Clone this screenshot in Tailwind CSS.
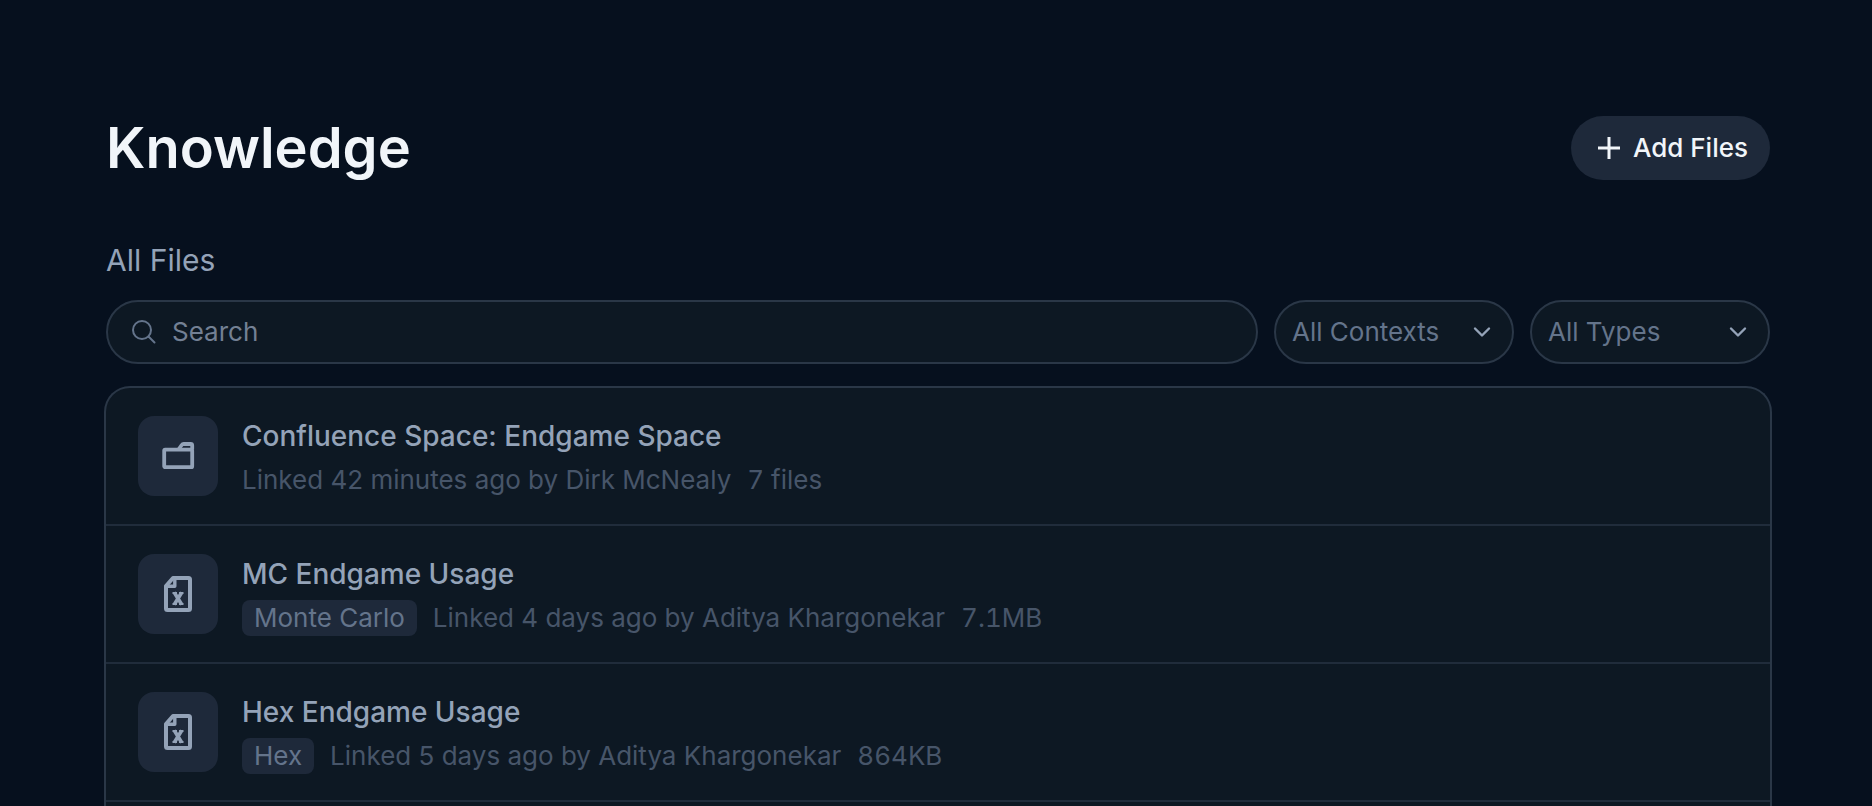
<!DOCTYPE html>
<html lang="en">
<head>
  <meta charset="UTF-8" />
  <meta name="viewport" content="width=device-width, initial-scale=1.0"/>
  <title>Knowledge</title>
  <script src="https://cdn.jsdelivr.net/npm/@tailwindcss/browser@4"></script>
</head>
<body class="bg-[#06101e] font-['Inter',sans-serif] text-[26px] leading-9">

  <main class="flex flex-col min-h-screen pl-[106px] pr-[102px] pt-[116px]">
    <header class="flex items-center justify-between">
      <h1 class="text-[56px] leading-16 font-semibold text-[#f1f5f9]">Knowledge</h1>
      <button type="button" class="flex items-center h-16 pl-6 pr-[22px] gap-2.5 rounded-full bg-[#1e293a] text-[#f1f5f9] font-medium">
        <svg class="w-7 h-7" viewBox="0 0 28 28" fill="none" stroke="currentColor" stroke-width="3"><path d="M14 3v22M3 14h22"/></svg>
        Add Files
      </button>
    </header>

    <h2 class="mt-[60px] text-[30px] leading-10 text-[#94a3b8]">All Files</h2>

    <!-- Filters -->
    <form class="mt-5 flex gap-4">
      <label class="flex flex-1 items-center h-16 pl-[22px] pr-6 gap-3.5 rounded-full border-2 border-[#2a3747] bg-[#0d1823]">
        <svg class="w-7 h-7 text-[#64748b]" viewBox="0 0 28 28" fill="none" stroke="currentColor" stroke-width="2" stroke-linecap="round"><circle cx="12" cy="12" r="9"/><path d="M18.5 18.5l6 6"/></svg>
        <input type="text" aria-label="Search" placeholder="Search" class="flex-1 bg-transparent outline-none text-[#cbd5e1] placeholder:text-[#738094]" />
      </label>
      <div class="relative w-60">
        <select aria-label="Context" class="appearance-none w-full h-16 px-4 rounded-full border-2 border-[#2a3747] bg-[#0d1823] text-[#64748b]">
          <option>All Contexts</option>
        </select>
        <svg class="absolute right-5 top-5 w-6 h-6 text-[#94a3b8] pointer-events-none" viewBox="0 0 24 24" fill="none" stroke="currentColor" stroke-width="2.4" stroke-linecap="round" stroke-linejoin="round"><path d="M5 8.5l7 7 7-7"/></svg>
      </div>
      <div class="relative w-60">
        <select aria-label="Type" class="appearance-none w-full h-16 px-4 rounded-full border-2 border-[#2a3747] bg-[#0d1823] text-[#64748b]">
          <option>All Types</option>
        </select>
        <svg class="absolute right-5 top-5 w-6 h-6 text-[#94a3b8] pointer-events-none" viewBox="0 0 24 24" fill="none" stroke="currentColor" stroke-width="2.4" stroke-linecap="round" stroke-linejoin="round"><path d="M5 8.5l7 7 7-7"/></svg>
      </div>
    </form>

    <!-- File list -->
    <ul class="flex-1 mt-[22px] -mx-0.5 rounded-t-[26px] border-2 border-b-0 border-[#2a3747] bg-[#0d1823] text-[#475569]">
      <li class="flex items-center gap-6 px-8 h-[138px] border-b-2 border-[#202c3b]">
        <div class="flex items-center justify-center w-20 h-20 rounded-2xl bg-[#1e293a] text-[#94a3b8]">
          <svg class="w-10 h-10" viewBox="0 0 40 40" fill="none" stroke="currentColor" stroke-width="3.8" stroke-linejoin="round"><rect x="6.2" y="13.6" width="28" height="17.6" rx="1"/><path d="M20.5 13.5l3.2-4.5q.7-1 2-1h7q1.500 0 1.500 1.500v4"/></svg>
        </div>
        <div class="pt-1">
          <div class="text-[28px] leading-9 font-medium text-[#94a3b8]">Confluence Space: Endgame Space</div>
          <div class="flex gap-4 mt-2"><span>Linked 42 minutes ago by Dirk McNealy</span><span class="tabular-nums">7 files</span></div>
        </div>
      </li>
      <li class="flex items-center gap-6 px-8 h-[138px] border-b-2 border-[#202c3b]">
        <div class="flex items-center justify-center w-20 h-20 rounded-2xl bg-[#1e293a] text-[#94a3b8]">
          <svg class="w-10 h-10" viewBox="0 0 40 40" fill="none" stroke="currentColor" stroke-width="4" stroke-linejoin="round"><path d="M8 12l7-8h15.500q1.500 0 1.500 1.500v29q0 1.500-1.500 1.500h-21q-1.500 0-1.500-1.500z"/><path d="M16.800 4.500v7.700h-8.500" stroke-width="3.400"/><path d="M16.300 18.500l7.400 12M23.700 18.500l-7.400 12" stroke-width="3.600"/><path d="M14.500 19h4.500M21 19h4.500M14.500 30h4.500M21 30h4.500" stroke-width="2.200"/></svg>
        </div>
        <div class="pt-1">
          <div class="text-[28px] leading-9 font-medium text-[#94a3b8]">MC Endgame Usage</div>
          <div class="flex gap-4 mt-2"><span class="px-3 rounded-lg bg-[#1e293a] text-[#64748b]">Monte Carlo</span><span>Linked 4 days ago by Aditya Khargonekar</span><span class="tabular-nums">7.1MB</span></div>
        </div>
      </li>
      <li class="flex items-center gap-6 px-8 h-[138px] border-b-2 border-[#202c3b]">
        <div class="flex items-center justify-center w-20 h-20 rounded-2xl bg-[#1e293a] text-[#94a3b8]">
          <svg class="w-10 h-10" viewBox="0 0 40 40" fill="none" stroke="currentColor" stroke-width="4" stroke-linejoin="round"><path d="M8 12l7-8h15.500q1.500 0 1.500 1.500v29q0 1.500-1.500 1.500h-21q-1.500 0-1.500-1.500z"/><path d="M16.800 4.500v7.700h-8.500" stroke-width="3.400"/><path d="M16.300 18.500l7.400 12M23.700 18.500l-7.400 12" stroke-width="3.600"/><path d="M14.500 19h4.500M21 19h4.500M14.500 30h4.500M21 30h4.500" stroke-width="2.200"/></svg>
        </div>
        <div class="pt-1">
          <div class="text-[28px] leading-9 font-medium text-[#94a3b8]">Hex Endgame Usage</div>
          <div class="flex gap-4 mt-2"><span class="px-3 rounded-lg bg-[#1e293a] text-[#64748b]">Hex</span><span>Linked 5 days ago by Aditya Khargonekar</span><span class="tabular-nums">864KB</span></div>
        </div>
      </li>
    </ul>
  </main>

</body>
</html>
